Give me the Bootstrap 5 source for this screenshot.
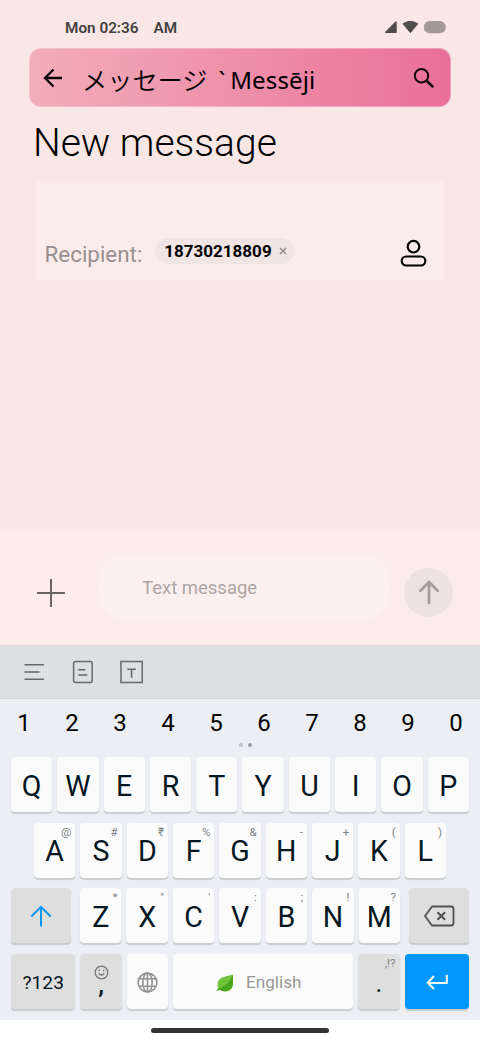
<!DOCTYPE html>
<html lang="en">
<head>
<meta charset="utf-8">
<meta name="viewport" content="width=device-width, initial-scale=1">
<title>New message</title>
<link href="https://cdn.jsdelivr.net/npm/bootstrap@5.3.0/dist/css/bootstrap.min.css" rel="stylesheet">
<style>
body{font-family:Roboto,"Noto Sans CJK JP",sans-serif;background:#f9e7e6;color:#000;width:480px;height:1040px;overflow:hidden;line-height:1}
svg{display:block;flex:none}
.statusline{height:48px;padding:9px 34px 0 65px;font-size:15.3px;font-weight:600;color:#454140}
.titlebar{height:59px;margin:0 29px 0 29px;padding:0 15px 0 12px;border-radius:12px;border:1px solid rgba(255,235,240,.35);background:linear-gradient(90deg,#f2adb8,#ee8faa 50%,#e96f99) border-box}
.jp{font:350 25.2px "Noto Sans CJK JP",sans-serif;line-height:36px}
.latin{font:400 24px "Noto Sans",sans-serif;line-height:36px}
.heading{font-size:39px;font-weight:300;line-height:46px;margin:13px 0 0 33px;height:61px}
.recipient{height:99px;margin:0 36px 0 36px;padding:0 17px 12px 8px;background:#faeceb}
.reclabel{font-size:22.4px;color:#998f8f;line-height:27px;margin-left:.5px}
.chip{height:26px;width:139px;border-radius:13px;background:#f0e4e4;font-size:17px;font-weight:700;padding-left:9px;margin:0 0 4px 13px}
.compose{height:116px;background:#fbeceb;padding:0 27px 0 36px}
.inputbox{width:290px;height:64px;border-radius:24px;background:#fbf0ef;color:#ada5a5;font-size:18.5px;padding:4px 0 0 43px;margin-top:-1px}
.send{width:49px;height:49px;background:#ede1e1;margin-top:11px}
.tools{height:54px;background:#dedfe1;border-bottom:1px solid #d0d2d4;padding:1px 0 0 23px;color:#666869}
.keyboard{height:321px;background:#ebeef2;padding:0 11px;color:#04161f}
.digits{height:44px;margin:0 -11px;padding-top:4px;font-size:24px;color:#000}
.dots{height:14px;padding-left:228px;gap:5px}
.dots i{width:4px;height:4px;background:#989da1}
.keyrow{height:55px;margin-bottom:10.7px;gap:5px;justify-content:space-between}
.key{position:relative;width:41.4px;height:55px;border-radius:4px;background:#fbfbfb;box-shadow:0 1.5px 1px #c9cdd0;font-size:28.6px;font-weight:370;padding-top:3px}
.key sup{position:absolute;top:3px;right:4px;font-size:11.5px;line-height:12px;color:#7b8286}
.gray{background:#dedede}
.enter{background:#0098fe}
.homearea{height:20px;background:#fff}
.homebar{width:178px;height:4.5px;background:#333}
</style>
</head>
<body>
<div class="statusline d-flex align-items-center justify-content-between">
  <div class="d-flex"><span>Mon 02:36</span><span style="margin-left:15px">AM</span></div>
  <div class="d-flex align-items-center">
    <svg style="margin-top:-3px" width="62" height="14" viewBox="0 0 62 14"><path d="M1.8 12.3 12 2v10.3Z" fill="#514d4c" stroke="#514d4c" stroke-width="1.5" stroke-linejoin="round"/><path d="M19 3.8Q26.3-1 33.8 3.8L26.4 12.7Z" fill="#514d4c" stroke="#514d4c" stroke-linejoin="round"/><rect x="39.8" y="1" width="22" height="12.3" rx="6" fill="#a29896"/></svg>
  </div>
</div>
<header class="titlebar d-flex align-items-center">
  <svg width="22" height="24" viewBox="0 0 22 24" fill="none" stroke="#080406" stroke-width="2.3"><path d="M20 12H3M11.500 3.500 3 12l8.500 8.500"/></svg>
  <div class="jp" style="margin:3px 0 0 18px">メッセージ</div>
  <div class="latin" style="margin:5px 0 0 11px">`<span style="margin-left:5px;letter-spacing:.15px">Messēji</span></div>
  <svg class="ms-auto" width="22" height="22" viewBox="0 0 22 22" fill="none" stroke="#160810" stroke-width="2"><circle cx="8.500" cy="8.700" r="6.700"/><path d="m13.300 13.500 6.900 6.700" stroke-width="2.500"/></svg>
</header>
<h1 class="heading mb-0">New message</h1>
<section class="recipient d-flex align-items-end">
  <span class="reclabel">Recipient:</span>
  <span class="chip d-flex align-items-center"><span>18730218809</span><svg style="margin-left:7px" width="8" height="8" viewBox="0 0 8 8"><path d="m1 1 6 6M7 1 1 7" stroke="#8b8383" stroke-width="1.200"/></svg></span>
  <svg class="ms-auto" width="28" height="30" viewBox="0 0 28 30" fill="none" stroke="#000" stroke-width="2.200"><circle cx="14.500" cy="8.700" r="5.800"/><rect x="2.700" y="18.500" width="23.600" height="9" rx="4.500"/></svg>
</section>
<div style="height:249px"></div>
<section class="compose d-flex align-items-center">
  <svg style="margin-top:11px" width="30" height="30" viewBox="0 0 30 30"><path d="M15 1v28M1 15h28" stroke="#696363" stroke-width="2"/></svg>
  <div class="inputbox d-flex align-items-center" style="margin-left:33px">Text message</div>
  <div class="send rounded-circle d-flex align-items-center justify-content-center ms-auto"><svg width="22" height="26" viewBox="0 0 22 26" fill="none" stroke="#a69c9c" stroke-width="2.800" stroke-linecap="round" stroke-linejoin="round"><path d="M11 23V2M2.400 10.700 11 2l8.600 8.700"/></svg></div>
</section>
<nav class="tools d-flex align-items-center">
  <svg width="126" height="24" viewBox="0 0 126 24" fill="none" stroke="currentColor" stroke-width="1.500"><path d="M1.500 4.800h19.400M1.500 12h15M1.500 19.200h19.400"/><rect x="50.600" y="1.600" width="18.600" height="20.800" rx="2"/><path d="M55.300 9.700h7M55.300 15h9"/><path d="M98 1.600h21.200v20.800H98ZM104.300 9.300h8.600M108.600 9.300v8.400"/></svg>
</nav>
<main class="keyboard">
  <div class="digits d-flex align-items-center text-center"><span class="flex-fill">1</span><span class="flex-fill">2</span><span class="flex-fill">3</span><span class="flex-fill">4</span><span class="flex-fill">5</span><span class="flex-fill">6</span><span class="flex-fill">7</span><span class="flex-fill">8</span><span class="flex-fill">9</span><span class="flex-fill">0</span></div>
  <div class="dots d-flex"><i class="rounded-circle opacity-50"></i><i class="rounded-circle"></i></div>
  <div class="keyrow d-flex">
    <div class="key d-flex align-items-center justify-content-center">Q</div><div class="key d-flex align-items-center justify-content-center">W</div><div class="key d-flex align-items-center justify-content-center">E</div><div class="key d-flex align-items-center justify-content-center">R</div><div class="key d-flex align-items-center justify-content-center">T</div><div class="key d-flex align-items-center justify-content-center">Y</div><div class="key d-flex align-items-center justify-content-center">U</div><div class="key d-flex align-items-center justify-content-center">I</div><div class="key d-flex align-items-center justify-content-center">O</div><div class="key d-flex align-items-center justify-content-center">P</div>
  </div>
  <div class="keyrow d-flex" style="padding:0 23px">
    <div class="key d-flex align-items-center justify-content-center">A<sup>@</sup></div><div class="key d-flex align-items-center justify-content-center">S<sup>#</sup></div><div class="key d-flex align-items-center justify-content-center">D<sup>₹</sup></div><div class="key d-flex align-items-center justify-content-center">F<sup>%</sup></div><div class="key d-flex align-items-center justify-content-center">G<sup>&amp;</sup></div><div class="key d-flex align-items-center justify-content-center">H<sup>-</sup></div><div class="key d-flex align-items-center justify-content-center">J<sup>+</sup></div><div class="key d-flex align-items-center justify-content-center">K<sup>(</sup></div><div class="key d-flex align-items-center justify-content-center">L<sup>)</sup></div>
  </div>
  <div class="keyrow d-flex">
    <div class="key gray d-flex align-items-center justify-content-center" style="width:60px;margin-right:4px"><svg style="margin-top:-2px" width="22" height="22" viewBox="0 0 22 22" fill="none" stroke="#0a97f5" stroke-width="2"><path d="M11 21.500V2M1.300 11.500 11 1.800l9.700 9.700"/></svg></div>
    <div class="key d-flex align-items-center justify-content-center">Z<sup>*</sup></div><div class="key d-flex align-items-center justify-content-center">X<sup>"</sup></div><div class="key d-flex align-items-center justify-content-center">C<sup>'</sup></div><div class="key d-flex align-items-center justify-content-center">V<sup>:</sup></div><div class="key d-flex align-items-center justify-content-center">B<sup>;</sup></div><div class="key d-flex align-items-center justify-content-center">N<sup>!</sup></div><div class="key d-flex align-items-center justify-content-center">M<sup>?</sup></div>
    <div class="key gray d-flex align-items-center justify-content-center" style="width:60px;margin-left:4px"><svg style="margin-top:-2px" width="32" height="22" viewBox="0 0 32 22" fill="none" stroke="#505050" stroke-width="1.800" stroke-linejoin="round"><path d="M9 1.500h19q2.500 0 2.500 2.500v14q0 2.500-2.500 2.500H9L2 11Z"/><path d="m14.500 7.200 7.600 7.600m0-7.600-7.600 7.600" stroke-width="2"/></svg></div>
  </div>
  <div class="keyrow d-flex mb-0">
    <div class="key gray d-flex align-items-center justify-content-center" style="width:64.500px;font-size:19.200px">?123</div>
    <div class="key gray d-flex flex-column align-items-center"><svg style="margin-top:8px" width="15" height="15" viewBox="0 0 15 15" fill="none" stroke="#777" stroke-width="1.300"><circle cx="7.500" cy="7.500" r="6.300"/><path d="M4.600 8.500q2.900 3 5.800 0M5.300 4.700v1.600M9.700 4.700v1.600"/></svg><span style="font-size:26px;font-weight:500;margin-top:-9px">,</span></div>
    <div class="key d-flex align-items-center justify-content-center"><svg style="margin-top:-1px" width="21" height="21" viewBox="0 0 21 21" fill="none" stroke="#939393" stroke-width="1.600"><circle cx="10.500" cy="10.500" r="9.400"/><ellipse cx="10.500" cy="10.500" rx="4.700" ry="9.400"/><path d="M2.200 6.700h16.600M2.200 14.300h16.600M10.500 1v19"/></svg></div>
    <div class="key d-flex align-items-center justify-content-center" style="width:180px;font-size:17.200px;color:#999;padding-right:9px"><svg style="margin-right:12px" width="18" height="18" viewBox="0 0 18 18"><path d="M17 .8v9c-.5 5-4 7.500-8 7.500-2 0-3.500-.4-5-1.500L.5 16.800 2 14C-.5 4 8 2.500 17 .8Z" fill="#70c43a"/><path d="M17 1v9c-.5 5-4 7.300-8 7.300-2 0-3.500-.4-5-1.500L.5 16.800l2-2C10 12 13 8 17 1Z" fill="#4aa61d"/></svg>English</div>
    <div class="key gray d-flex align-items-center justify-content-center"><span style="font-weight:400;font-size:25px">.</span><sup>,!?</sup></div>
    <div class="key enter d-flex align-items-center justify-content-center" style="width:64.500px"><svg style="margin-top:-2px" width="22" height="16" viewBox="0 0 22 16" fill="none" stroke="#fff" stroke-width="2"><path d="M20.800 1v8H2M8 2 1.700 8.700 8 15"/></svg></div>
  </div>
</main>
<footer class="homearea d-flex justify-content-center"><div class="homebar rounded-pill" style="margin-top:8px"></div></footer>
<script src="https://cdn.jsdelivr.net/npm/bootstrap@5.3.0/dist/js/bootstrap.bundle.min.js"></script>
</body>
</html>
